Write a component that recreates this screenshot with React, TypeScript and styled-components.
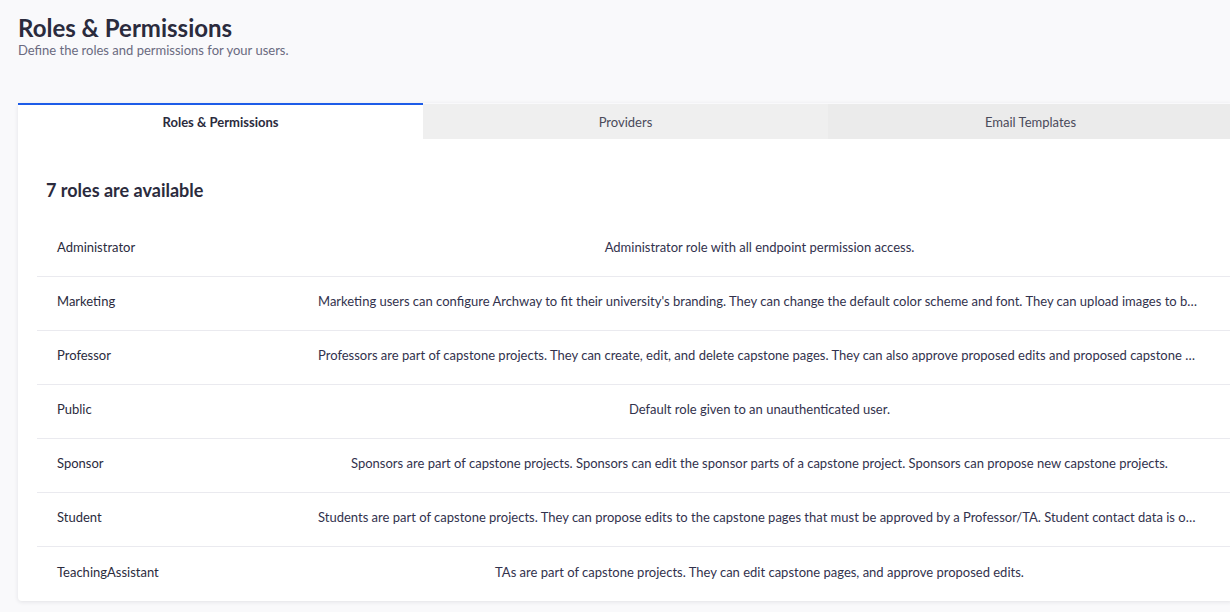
import styled, { createGlobalStyle } from 'styled-components';

const GlobalStyle = createGlobalStyle`
    html, body {
        margin: 0;
        padding: 0;
        background-color: #f9f9fb;
        overflow: hidden;
    }
    * {
        box-sizing: border-box;
    }
`;

const roles = [
    { name: 'Administrator', description: 'Administrator role with all endpoint permission access.' },
    { name: 'Marketing', description: "Marketing users can configure Archway to fit their university's branding. They can change the default color scheme and font. They can upload images to be used across the site." },
    { name: 'Professor', description: 'Professors are part of capstone projects. They can create, edit, and delete capstone pages. They can also approve proposed edits and proposed capstone projects.' },
    { name: 'Public', description: 'Default role given to an unauthenticated user.' },
    { name: 'Sponsor', description: 'Sponsors are part of capstone projects. Sponsors can edit the sponsor parts of a capstone project. Sponsors can propose new capstone projects.' },
    { name: 'Student', description: 'Students are part of capstone projects. They can propose edits to the capstone pages that must be approved by a Professor/TA. Student contact data is only visible to professors.' },
    { name: 'TeachingAssistant', description: 'TAs are part of capstone projects. They can edit capstone pages, and approve proposed edits.' },
];

const tabs = ['Roles & Permissions', 'Providers', 'Email Templates'];

function App() {
    return (
        <Page>
            <GlobalStyle />
            <Header>
                <h1>Roles &amp; Permissions</h1>
                <p>Define the roles and permissions for your users.</p>
            </Header>
            <Card>
                <TabBar>
                    {tabs.map((t, i) => (
                        <Tab key={t} $active={i === 0} $shade={i === 2 ? '#ebebeb' : '#efefef'}>
                            {t}
                        </Tab>
                    ))}
                </TabBar>
                <Body>
                    <h2>7 roles are available</h2>
                    <Table>
                        {roles.map((r, i) => (
                            <Row key={r.name} $last={i === roles.length - 1}>
                                <NameCell>{r.name}</NameCell>
                                <DescCell>{r.description}</DescCell>
                            </Row>
                        ))}
                    </Table>
                </Body>
            </Card>
        </Page>
    );
}

const Page = styled.div`
    width: 1250px;
    height: 612px;
    padding: 15px 0 0 18px;
    font-family: Lato, 'Open Sans', sans-serif;
    color: #32324d;
`;

const Header = styled.div`
    h1 {
        margin: 0;
        font-size: 24px;
        line-height: 26px;
        font-weight: 700;
        color: #2b2b3d;
    }
    p {
        margin: 1px 0 0;
        font-size: 13px;
        line-height: 16px;
        color: #6a6a80;
    }
`;

const Card = styled.div`
    margin-top: 45px;
    width: 1215px;
    background-color: #ffffff;
    border-radius: 4px;
    box-shadow: 0px 1px 4px rgba(33, 33, 52, 0.1);
`;

const TabBar = styled.div`
    display: grid;
    grid-template-columns: repeat(3, 1fr);
    background-color: #f9f9fb;
`;

const Tab = styled.div<{ $active: boolean; $shade: string }>`
    height: ${(p) => (p.$active ? '36px' : '35px')};
    margin-top: ${(p) => (p.$active ? '0' : '1px')};
    display: flex;
    align-items: center;
    justify-content: center;
    font-size: 13px;
    font-weight: ${(p) => (p.$active ? 700 : 400)};
    color: ${(p) => (p.$active ? '#2b2b3d' : '#4a4a5a')};
    background-color: ${(p) => (p.$active ? '#ffffff' : p.$shade)};
    border-top: ${(p) => (p.$active ? '2px solid #1d5ce8' : 'none')};
`;

const Body = styled.div`
    padding: 39px 0 0 19px;

    h2 {
        margin: 0 0 0 9px;
        font-size: 18px;
        line-height: 24px;
        font-weight: 700;
        color: #2b2b3d;
    }
`;

const Table = styled.div`
    margin-top: 21px;
    display: flex;
    flex-direction: column;
`;

const Row = styled.div<{ $last: boolean }>`
    display: grid;
    grid-template-columns: 281px 1fr;
    align-items: center;
    height: 54px;
    padding-bottom: 5px;
    border-bottom: ${(p) => (p.$last ? 'none' : '1px solid #eaeaef')};
`;

const NameCell = styled.div`
    padding-left: 20px;
    font-size: 13px;
    color: #2b2b3d;
    white-space: nowrap;
`;

const DescCell = styled.div`
    padding-right: 32px;
    font-size: 13px;
    color: #32324d;
    text-align: center;
    white-space: nowrap;
    overflow: hidden;
    text-overflow: ellipsis;
`;

export default App;
